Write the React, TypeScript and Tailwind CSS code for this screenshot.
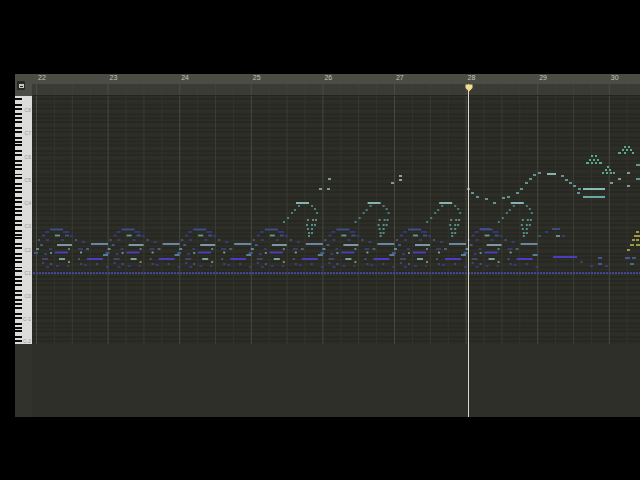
import React from 'react';

type Note = [number, number, number, string];

const BAR = 71.6;
const FIRST_BAR = 36;
const bars = [22, 23, 24, 25, 26, 27, 28, 29, 30];

// one bar of accompaniment: start, end (relative to the bar line), y, colour
const accompaniment: Note[] = [
  [14, 27, 229.5, '#3f5090'],
  [9, 13, 232, '#38388a'],
  [27, 33, 232, '#38388a'],
  [19, 24, 235.5, '#6a9a98'],
  [29, 33, 235.5, '#3a5878'],
  [6, 9, 235.5, '#3a4078'],
  [34, 37, 236, '#38388a'],
  [2, 4, 240, '#4a5a90'],
  [39, 41, 240, '#4a5a90'],
  [10, 13, 240, '#3a4078'],
  [25, 28, 240, '#3a4078'],
  [46, 49, 242, '#3a4078'],
  [21, 36, 245, '#8aa4b0'],
  [55, 72, 244, '#7490b0'],
  [4, 7, 245, '#4a5a90'],
  [0, 3, 249, '#5a9a98'],
  [13, 16, 249, '#3a4078'],
  [32, 34, 249, '#5a8f90'],
  [42, 47, 249, '#3a4078'],
  [50, 53, 249, '#4a6a80'],
  [19, 32, 252.5, '#4f40c0'],
  [14, 16, 253, '#6a9a98'],
  [44, 46, 252.5, '#8aa090'],
  [-2, 2, 253, '#4a5aa0'],
  [67, 72, 255, '#5a8aa0'],
  [8, 11, 254, '#3a4078'],
  [51, 67, 259, '#4f40d0'],
  [23, 29, 259, '#80b0a0'],
  [6, 12, 259, '#454a70'],
  [42, 44, 259, '#4a5a80'],
  [32, 34, 262, '#7f9a60'],
  [6, 8, 263, '#454a70'],
  [14, 16, 264, '#4a5a80'],
  [31, 33, 266, '#3a4078'],
  [44, 46, 264, '#454a70'],
  [70, 73, 267, '#3a4078'],
  [10, 13, 267, '#38388a'],
  [48, 51, 265, '#38388a'],
  [20, 23, 266, '#38388a'],
  [60, 62, 264, '#454a70'],
];

// the arch that comes in from bar 25 on
const arch: Note[] = [
  [45, 58, 203, '#8fc4c0'],
  [32, 34, 222, '#4f8a88'],
  [36, 38, 218, '#4f8a88'],
  [40, 42, 213, '#4f8a88'],
  [43, 45, 210, '#4f8a88'],
  [47, 49, 206, '#4f8a88'],
  [60, 62, 206, '#4f8a88'],
  [63, 65, 209, '#4f8a88'],
  [65, 67, 213, '#4f8a88'],
  [56, 58, 220, '#5a9a90'],
  [61, 63, 220, '#5a9a90'],
  [64, 66, 220, '#5a9a90'],
  [55, 57, 225, '#5a9a90'],
  [60, 62, 225, '#5a9a90'],
  [63, 65, 225, '#5a9a90'],
  [56, 58, 229, '#5a9a90'],
  [60, 62, 229, '#5a9a90'],
  [57, 59, 233, '#5a9a90'],
  [60, 62, 233, '#5a9a90'],
  [57, 59, 236, '#5a9a90'],
];

const melody: Note[] = [
  [319, 322, 189, '#8aa8a0'],
  [327, 330, 189, '#8aa8a0'],
  [328, 331, 179, '#8aa8a0'],
  [391, 394, 183, '#8aa8a0'],
  [399, 402, 176, '#a0b0a0'],
  [399, 402, 180, '#a0b0a0'],
  [467, 470, 189, '#6aa0a0'],
  [471, 474, 193, '#6aa0a0'],
  [476, 479, 197, '#6aa0a0'],
  [485, 488, 199, '#6aa0a0'],
  [493, 496, 203, '#6aa0a0'],
  [502, 505, 198, '#6aa0a0'],
  [507, 510, 197, '#6aa0a0'],
  [516, 519, 193, '#6aa0a0'],
  [520, 523, 189, '#6aa0a0'],
  [525, 528, 183, '#6aa0a0'],
  [529, 532, 179, '#6aa0a0'],
  [533, 536, 175, '#6aa0a0'],
  [538, 541, 173, '#6aa0a0'],
  [547, 556, 174, '#8fc4c0'],
  [561, 564, 176, '#6aa0a0'],
  [565, 568, 180, '#6aa0a0'],
  [569, 572, 183, '#6aa0a0'],
  [573, 576, 186, '#6aa0a0'],
  [578, 581, 189, '#6aa0a0'],
  [577, 580, 193, '#6aa0a0'],
  [583, 605, 189, '#8fd0c8'],
  [583, 605, 197, '#6fb8b0'],
  [610, 613, 183, '#8aa8a0'],
  [618, 621, 179, '#8aa8a0'],
  [627, 630, 173, '#8aa8a0'],
  [627, 630, 186, '#8aa8a0'],
  [636, 640, 165, '#6aa0a0'],
  [636, 640, 179, '#6aa0a0'],
  // green clusters
  [591, 593, 156, '#5fb89a'],
  [595, 597, 156, '#5fb89a'],
  [589, 591, 160, '#5fb89a'],
  [593, 595, 160, '#5fb89a'],
  [597, 599, 160, '#5fb89a'],
  [586, 589, 163, '#5fb89a'],
  [591, 593, 163, '#5fb89a'],
  [595, 597, 163, '#5fb89a'],
  [599, 602, 163, '#5fb89a'],
  [607, 609, 167, '#5fb89a'],
  [605, 607, 170, '#5fb89a'],
  [609, 611, 170, '#5fb89a'],
  [602, 604, 173, '#5fb89a'],
  [606, 608, 173, '#5fb89a'],
  [610, 612, 173, '#5fb89a'],
  [613, 615, 173, '#5fb89a'],
  [624, 626, 147, '#5fb89a'],
  [628, 630, 147, '#5fb89a'],
  [622, 624, 150, '#5fb89a'],
  [626, 628, 150, '#5fb89a'],
  [630, 632, 150, '#5fb89a'],
  [618, 621, 153, '#5fb89a'],
  [624, 626, 153, '#5fb89a'],
  [632, 634, 153, '#5fb89a'],
  // olive chord on the right edge
  [636, 639, 232, '#a8a84a'],
  [634, 637, 236, '#a8a84a'],
  [637, 640, 236, '#a8a84a'],
  [632, 635, 240, '#a8a84a'],
  [636, 639, 240, '#a8a84a'],
  [630, 634, 245, '#a8a84a'],
  [636, 640, 245, '#a8a84a'],
  [627, 630, 250, '#a8a84a'],
  // thin ending of the accompaniment
  [480, 490, 229, '#3f5090'],
  [552, 560, 229, '#3f5090'],
  [553, 577, 257, '#4f40d0'],
  [556, 560, 236, '#6a9a98'],
  [538, 541, 236, '#3a5878'],
  [545, 548, 232, '#38388a'],
  [562, 565, 236, '#3a4078'],
  [580, 583, 262, '#3a4078'],
  [590, 593, 266, '#3a4078'],
  [598, 602, 258, '#4a5aa0'],
  [598, 602, 264, '#4a5aa0'],
  [605, 608, 266, '#3a4078'],
  [625, 630, 258, '#4a5aa0'],
  [632, 636, 258, '#4a5aa0'],
  [630, 634, 264, '#4f6f90'],
];

const dottedLine = Array.from({ length: 203 }, (_, i) => 33 + i * 3);
const rows = Array.from({ length: 128 }, (_, i) => 127 - i);
const isBlack = (midi: number) => [1, 3, 6, 8, 10].includes(midi % 12);

const Piano = () => (
  <div className="flex h-[248px] flex-col overflow-hidden bg-[#dcdcda]">
    {rows.map((midi) => (
      <div key={midi} className="flex h-[1.9375px] shrink-0 items-center justify-between">
        <div className={`h-full w-[7px] ${isBlack(midi) ? 'bg-[#0c0c0c]' : ''}`} />
        {midi % 12 === 0 && (
          <span className={`pr-[1px] text-[5px] leading-none text-[#9a9a98] ${midi === 0 ? 'self-end' : ''}`}>
            C{midi / 12 - 2}
          </span>
        )}
      </div>
    ))}
  </div>
);

const Ticks = () => (
  <svg width="608" height="11" viewBox="32 84 608 11" className="block">
    {Array.from({ length: 36 }, (_, i) => (
      <rect
        key={i}
        x={FIRST_BAR + (i * BAR) / 4}
        y="84"
        width="1"
        height="11"
        fill={i % 4 === 0 ? '#4b4c46' : '#40413b'}
      />
    ))}
  </svg>
);

const Grid = () => (
  <svg width="608" height="248" viewBox="32 96 608 248" className="block shrink-0">
    <rect x="32" y="96" width="608" height="248" fill="#2d2e28" />
    {rows.map((midi, i) =>
      isBlack(midi) ? (
        <rect key={midi} x="32" y={96 + i * 1.9375} width="608" height="1.9375" fill="#272821" />
      ) : null,
    )}
    {Array.from({ length: 36 }, (_, i) => (
      <rect
        key={i}
        x={FIRST_BAR + (i * BAR) / 4}
        y="96"
        width="1"
        height="248"
        fill={i % 4 === 0 ? '#464741' : i % 2 === 0 ? '#3a3b35' : '#33342d'}
      />
    ))}
    <g className="blur-[0.3px]">
      {dottedLine.map((x) => (
        <rect key={x} x={x} y="272.2" width="2" height="1.8" fill="#4a48a0" />
      ))}
      {Array.from({ length: 7 }, (_, k) =>
        accompaniment.map(([a, b, y, c], i) => (
          <rect
            key={`${k}-${i}`}
            x={FIRST_BAR + k * BAR + a}
            y={y - 0.9}
            width={b - a}
            height="1.8"
            fill={c}
          />
        )),
      )}
      {Array.from({ length: 4 }, (_, k) =>
        arch.map(([a, b, y, c], i) => (
          <rect key={`${k}-${i}`} x={251 + k * BAR + a} y={y - 0.9} width={b - a} height="1.8" fill={c} />
        )),
      )}
      {melody.map(([a, b, y, c], i) => (
        <rect key={i} x={a} y={y - 0.9} width={b - a} height="1.8" fill={c} />
      ))}
    </g>
  </svg>
);

const App = () => {
  return (
    <div className="h-[480px] w-[640px] overflow-hidden bg-black pb-[63px] pl-[15px] pt-[74px] font-['Liberation_Sans',sans-serif]">
      <div className="flex h-full">
        {/* piano column */}
        <div className="flex w-[17px] shrink-0 flex-col bg-[#31322c]">
          <div className="flex h-[22px] shrink-0 items-center bg-[#4b4d45] pl-[2px] pt-[1px]">
            <div className="flex h-[9px] w-[8px] items-center justify-center rounded-[1px] bg-[#2a2b26]">
              <div className="h-[4px] w-[5px] border border-[#c8c8c0] border-t-2" />
            </div>
          </div>
          <Piano />
        </div>

        {/* ruler and notes */}
        <div className="relative flex min-w-0 flex-1 flex-col bg-[#2e2f29]">
          <div className="flex h-[10px] shrink-0 bg-[#4b4d45] pl-[6px]">
            {bars.map((bar) => (
              <span key={bar} className="w-[71.6px] shrink-0 text-[7px] leading-[8px] text-[#c4c4bc]">
                {bar}
              </span>
            ))}
          </div>
          <div className="h-[12px] shrink-0 border-b border-[#24251f] bg-[#3a3b35]">
            <Ticks />
          </div>
          <Grid />

          {/* playhead */}
          <div className="absolute bottom-0 left-[436px] top-[10px] w-px bg-[#d8d8c4]" />
          <svg width="8" height="8" viewBox="0 0 8 8" className="absolute left-[433px] top-[10px]">
            <path d="M0.5 0.5H7.5V4L4 7.5L0.5 4Z" fill="#efdc8e" />
          </svg>
        </div>
      </div>
    </div>
  );
};

export default App;
